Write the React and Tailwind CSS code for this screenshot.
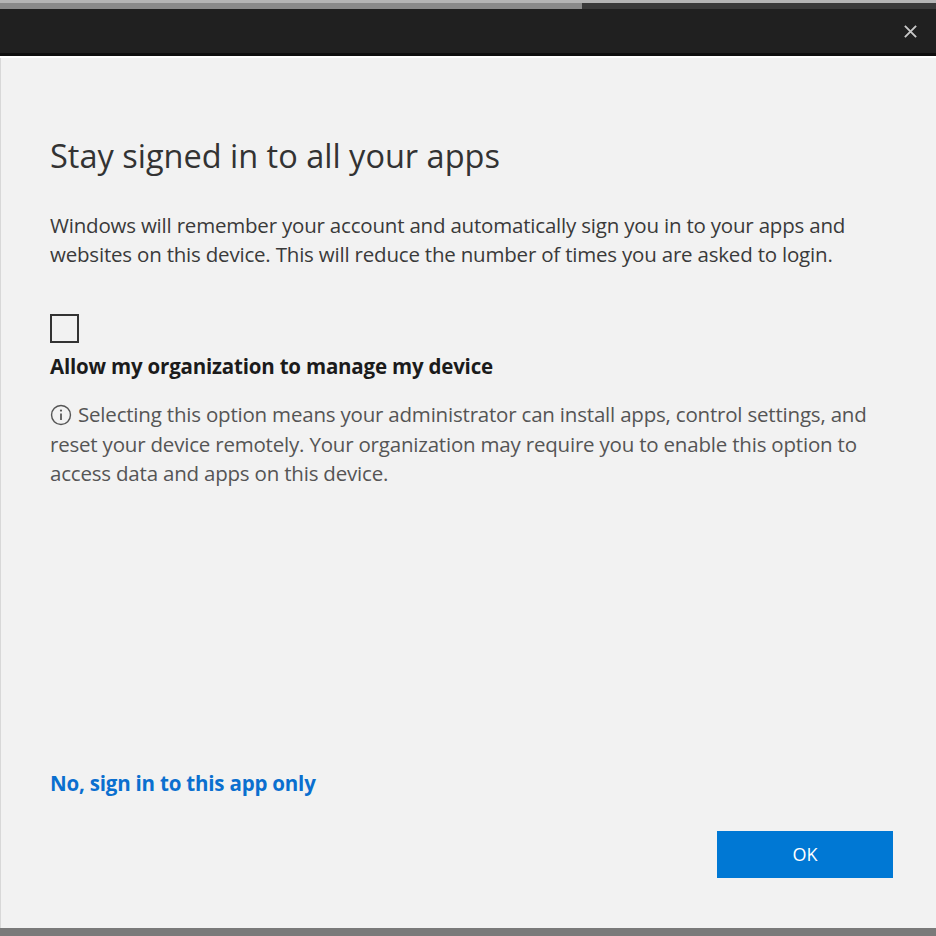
import React, { useState } from 'react';

function InfoIcon() {
  return (
    <svg width="22" height="22" viewBox="0 0 20 20" className="inline-block align-[-4px] mr-[6px]">
      <circle cx="10" cy="10" r="8.6" fill="none" stroke="#555" strokeWidth="1.3" />
      <line x1="10" y1="8.6" x2="10" y2="14.5" stroke="#555" strokeWidth="1.6" />
      <circle cx="10" cy="6" r="1" fill="#555" />
    </svg>
  );
}

export default function App() {
  const [manage, setManage] = useState(false);

  return (
    <div
      className="w-[936px] h-[936px] flex flex-col bg-[#f2f2f2] overflow-hidden"
      style={{ fontFamily: '"Open Sans", "Noto Sans", sans-serif' }}
    >
      {/* title bar */}
      <div className="flex flex-col shrink-0">
        <div className="h-[3px] bg-[#b5b5b5]" />
        <div className="h-[6px] flex bg-[#3a3a3a]">
          <div className="w-[582px] bg-[#8a8a8a]" />
        </div>
        <div className="h-[44px] bg-[#202020] flex items-center justify-end pr-[14px]">
          <button className="w-[24px] h-[24px] flex items-center justify-center">
            <svg width="15" height="15" viewBox="0 0 16 16">
              <path d="M2 2 L14 14 M14 2 L2 14" stroke="#c8c8c8" strokeWidth="2" />
            </svg>
          </button>
        </div>
        <div className="h-[3px] bg-[#0e0e0e]" />
        <div className="h-[2px] bg-white" />
      </div>

      {/* content */}
      <div className="flex-1 flex flex-col pl-[49px] pr-[30px] border-l border-[#d8d8d8]">
        <h1 className="mt-[78px] text-[32.5px] leading-[40px] text-[#333] font-normal">
          Stay signed in to all your apps
        </h1>
        <p className="mt-[35px] text-[20.5px] leading-[29px] text-[#3a3a3a] tracking-[-0.2px] whitespace-nowrap">
          Windows will remember your account and automatically sign you in to your apps and
          <br />
          websites on this device. This will reduce the number of times you are asked to login.
        </p>

        <button
          onClick={() => setManage(!manage)}
          className="mt-[45px] w-[29px] h-[29px] border-[2px] border-[#333] flex items-center justify-center"
        >
          {manage && (
            <svg width="18" height="18" viewBox="0 0 18 18">
              <path d="M3 9 L7 13 L15 4" fill="none" stroke="#333" strokeWidth="2" />
            </svg>
          )}
        </button>
        <div className="mt-[9px] text-[20.5px] leading-[29px] font-bold text-[#1b1b1b] tracking-[-0.2px]">
          Allow my organization to manage my device
        </div>

        <p className="mt-[19px] text-[20.5px] leading-[29.5px] text-[#555] tracking-[-0.2px] whitespace-nowrap">
          <InfoIcon />
          Selecting this option means your administrator can install apps, control settings, and
          <br />
          reset your device remotely. Your organization may require you to enable this option to
          <br />
          access data and apps on this device.
        </p>

        <div className="flex-1" />

        <a href="#" className="text-[20.5px] leading-[29px] font-bold text-[#0a6fcf] tracking-[-0.2px] w-fit">
          No, sign in to this app only
        </a>

        <div className="flex justify-end mt-[33px] mb-[50px] pr-[13px]">
          <button className="w-[176px] h-[47px] bg-[#0078d4] text-white text-[18px]">
            OK
          </button>
        </div>
      </div>

      <div className="h-[8px] bg-[#7a7a7a] shrink-0" />
    </div>
  );
}
